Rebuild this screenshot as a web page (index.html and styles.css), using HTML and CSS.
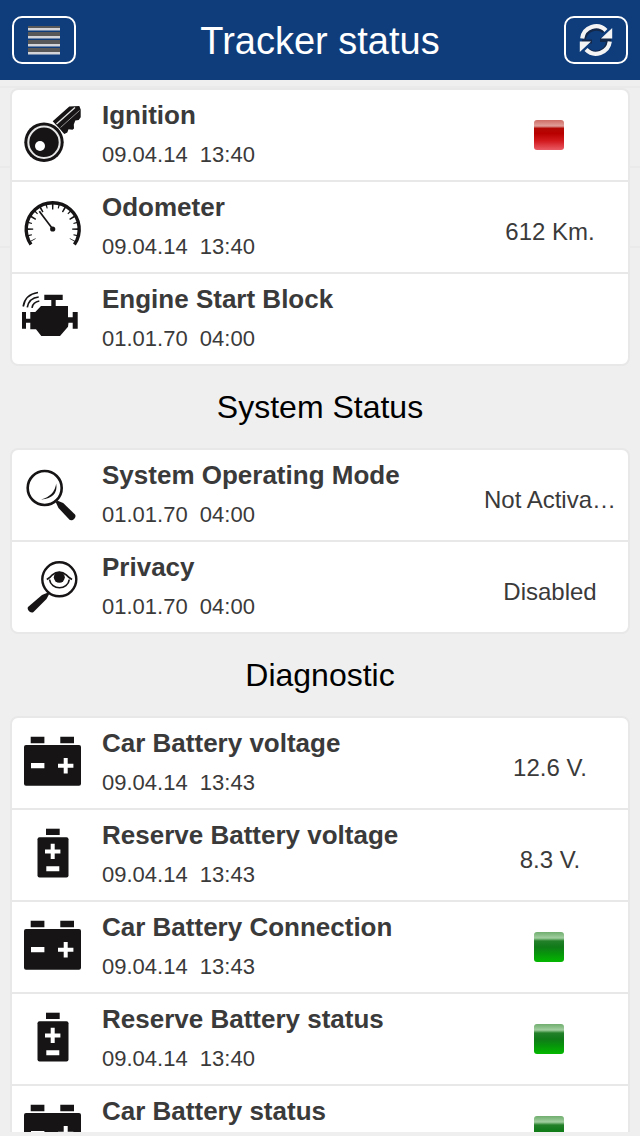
FILE: index.html
```html
<!DOCTYPE html>
<html lang="en">
<head>
    <meta charset="UTF-8">
    <meta name="viewport" content="width=device-width, initial-scale=1.0">
    <title>Tracker status</title>
    <link rel="stylesheet" href="styles.css">
</head>
<body>
    <!-- Shared icons -->
    <svg class="sprite" aria-hidden="true">
        <symbol id="car-battery" viewBox="0 0 90 90">
            <path d="M18.7 18.7h13.7v6.6H18.7zM48.3 18.7H62v6.6H48.3z"/>
            <rect x="12" y="27" width="57" height="40.7" rx="2"/>
            <path class="cut" d="M19 45h13.4v5.3H19zM51.7 40h4v5.7h5.7v4h-5.7v5.7h-4v-5.7H46v-4h5.7z"/>
        </symbol>
        <symbol id="reserve-battery" viewBox="0 0 90 90">
            <path d="M34 18.7h13.7V25H34z"/>
            <rect x="25.5" y="27.2" width="31" height="40.3" rx="2"/>
            <path class="cut" d="M38.7 33.7h4v5.7h5.7v4h-5.7V49h-4v-5.6H33v-4h5.7zM34.3 56.3h13v5h-13z"/>
        </symbol>
    </svg>

    <header class="topbar">
        <button class="topbar-button" type="button" aria-label="Menu">
            <svg width="34" height="30" viewBox="0 0 34 30">
                <path stroke="#585858" stroke-width="2" d="M1 2h32"/>
                <path stroke="#585858" stroke-width="4" d="M1 9h32M1 17h32M1 25h32"/>
                <path stroke="#d2d4d8" stroke-width="2.4" d="M1 4.200h32M1 12.200h32M1 20.200h32M1 28.200h32"/>
            </svg>
        </button>
        <h1>Tracker status</h1>
        <button class="topbar-button" type="button" aria-label="Refresh">
            <svg width="34" height="34" viewBox="0 0 34 34">
                <path fill="none" stroke="#14284a" stroke-width="4" d="M5 16A12.500 12.500 0 0 1 25 8.500M3 18.500h10M21 17h11M29 19A12.500 12.500 0 0 1 9 27"/>
                <path fill="none" stroke="#f4f4f4" stroke-width="4.200" d="M3.200 15.500A14 14 0 0 1 27 7.500M30.800 18.500A14 14 0 0 1 7 26.500"/>
                <path fill="#f4f4f4" d="M33.200 5v10.500H22zM.8 29V18.500H12z"/>
            </svg>
        </button>
    </header>

    <main class="content">
        <ul class="card">
            <li class="row">
                <svg class="icon" viewBox="0 0 90 90">
                    <path d="M40.700 31.300L57.300 16.500l10-.5 1.400 3.500v7.800l-2 2.700-3.400.5-1.500 4 .2 4-1.500 1.200-4-.5-1.200 3.200-3 1.600z"/>
                    <path class="line-light" stroke-width="1.300" d="M44.500 34L63 17.500"/>
                    <path class="line-light" stroke-width=".6" d="M48.500 37.500l19-17"/>
                    <circle class="cut" cx="32" cy="52.300" r="20.700"/>
                    <circle cx="32" cy="52.300" r="19.700"/>
                    <circle class="line-light" cx="32" cy="52.300" r="15.700" stroke-width="2"/>
                    <circle class="cut" cx="28" cy="56" r="5"/>
                </svg>
                <div class="info">
                    <h3>Ignition</h3>
                    <p>09.04.14&nbsp; 13:40</p>
                </div>
                <span class="lamp red" role="img" aria-label="Off"></span>
            </li>
            <li class="row">
                <svg class="icon" viewBox="0 0 90 90">
                    <path class="line" stroke-width="3.400" d="M19 62.500A26.500 26.500 0 1 1 62.400 62.500"/>
                    <path class="line" stroke-width="6" pathLength="240" stroke-dasharray="4 26" stroke-dashoffset="2" d="M21.200 58.300A22.500 22.500 0 1 1 60.200 58.300"/>
                    <path class="line" stroke-width="4" pathLength="240" stroke-dasharray="3 27" stroke-dashoffset="-13.500" d="M20.300 58.800A23.500 23.500 0 1 1 61.100 58.800"/>
                    <path class="line" stroke-width="1.700" d="M27.300 29.300L40.700 47"/>
                    <circle cx="40.700" cy="47" r="2.600"/>
                </svg>
                <div class="info">
                    <h3>Odometer</h3>
                    <p>09.04.14&nbsp; 13:40</p>
                </div>
                <span class="value">612 Km.</span>
            </li>
            <li class="row">
                <svg class="icon" viewBox="0 0 90 90">
                    <path d="M32.300 20.700h18.400V26h-7v6h-4.400v-6h-7z"/>
                    <path d="M29 32h27v11.300h4.700V38h5v16.700h-5v-6H56.500l-.5 4L48 62H29.300L24 55.300h-5.700v-6.600H14v6h-4V38h4v6.700h4.300V38h5z"/>
                    <path class="line" stroke-width="1.700" d="M11.200 32.500Q13 20.500 26 18.500M15.300 33.300Q17 24 26.700 23M20 33.800Q21 28 27.300 27"/>
                </svg>
                <div class="info">
                    <h3>Engine Start Block</h3>
                    <p>01.01.70&nbsp; 04:00</p>
                </div>
            </li>
        </ul>

        <h2>System Status</h2>
        <ul class="card">
            <li class="row">
                <svg class="icon" viewBox="0 0 90 90">
                    <circle class="line" cx="32.700" cy="38" r="17" stroke-width="2.600"/>
                    <path d="M44.200 33.500Q46.500 48 29 49.500Q42.500 46 44.200 33.500z"/>
                    <path d="M43.800 52.300l1.800-1.500 5.600 2.200L63 64.500c2 2.500-2.500 7.300-5.500 5.300L46.500 58z"/>
                </svg>
                <div class="info">
                    <h3>System Operating Mode</h3>
                    <p>01.01.70&nbsp; 04:00</p>
                </div>
                <span class="value">Not Activa…</span>
            </li>
            <li class="row">
                <svg class="icon" viewBox="0 0 90 90">
                    <circle class="line" cx="47.300" cy="37.300" r="17" stroke-width="2.400"/>
                    <path d="M36 50.500l-6 2.500L16 65c-1.500 2.500 2.500 7 5.500 5L34.500 57l2.800-5.200z"/>
                    <path class="line" stroke-width="1.700" d="M34.800 37.500Q39 35 40 33.200Q47.300 27 54.600 33.200Q56 35 60 37.500"/>
                    <path class="line" stroke-width="1.700" d="M37.500 37.500C39 48.500 56 48.500 57.300 37.500"/>
                    <circle cx="47.300" cy="35.300" r="5.500"/>
                </svg>
                <div class="info">
                    <h3>Privacy</h3>
                    <p>01.01.70&nbsp; 04:00</p>
                </div>
                <span class="value">Disabled</span>
            </li>
        </ul>

        <h2>Diagnostic</h2>
        <ul class="card">
            <li class="row">
                <svg class="icon"><use href="#car-battery"/></svg>
                <div class="info">
                    <h3>Car Battery voltage</h3>
                    <p>09.04.14&nbsp; 13:43</p>
                </div>
                <span class="value">12.6 V.</span>
            </li>
            <li class="row">
                <svg class="icon"><use href="#reserve-battery"/></svg>
                <div class="info">
                    <h3>Reserve Battery voltage</h3>
                    <p>09.04.14&nbsp; 13:43</p>
                </div>
                <span class="value">8.3 V.</span>
            </li>
            <li class="row">
                <svg class="icon"><use href="#car-battery"/></svg>
                <div class="info">
                    <h3>Car Battery Connection</h3>
                    <p>09.04.14&nbsp; 13:43</p>
                </div>
                <span class="lamp green" role="img" aria-label="OK"></span>
            </li>
            <li class="row">
                <svg class="icon"><use href="#reserve-battery"/></svg>
                <div class="info">
                    <h3>Reserve Battery status</h3>
                    <p>09.04.14&nbsp; 13:40</p>
                </div>
                <span class="lamp green" role="img" aria-label="OK"></span>
            </li>
            <li class="row">
                <svg class="icon"><use href="#car-battery"/></svg>
                <div class="info">
                    <h3>Car Battery status</h3>
                </div>
                <span class="lamp green" role="img" aria-label="OK"></span>
            </li>
        </ul>
    </main>
</body>
</html>
```
FILE: styles.css
```css
* {
    box-sizing: border-box;
}

body {
    font-family: "Liberation Sans", Arial, sans-serif;
    margin: 0;
    height: 100vh;
    padding-bottom: 4px;
    display: flex;
    flex-direction: column;
    background-color: #efefef;
    color: #3a3a3a;
}

h1, h2, h3, p, ul {
    margin: 0;
    padding: 0;
}

.sprite {
    display: none;
}

.topbar {
    display: flex;
    align-items: center;
    justify-content: space-between;
    flex-shrink: 0;
    height: 80px;
    padding: 0 12px;
    background-color: #0f3d7b;
    color: #fff;
}

.topbar h1 {
    padding-top: 2px;
    font-size: 38px;
    font-weight: normal;
}

.topbar-button {
    display: flex;
    align-items: center;
    justify-content: center;
    width: 64px;
    height: 48px;
    padding: 0;
    border: 2px solid #fff;
    border-radius: 10px;
    background: none;
}

.content {
    flex: 1;
    min-height: 0;
    overflow: hidden;
    padding: 8px 10px 0;
    /* faint row lines behind the first card */
    background: repeating-linear-gradient(#efefef 0 6px, #eaeaea 6px 8px, #efefef 8px 80px) no-repeat 0 0 / 100% 168px;
}

.content h2 {
    color: #000;
    font-size: 32px;
    font-weight: normal;
    line-height: 82px;
    text-align: center;
}

.card {
    list-style: none;
    background-color: #fff;
    border: 2px solid #e8e8e8;
    border-radius: 8px;
}

.row {
    display: flex;
    align-items: center;
    height: 92px;
    border-bottom: 2px solid #e8e8e8;
}

.row:last-child {
    height: 90px;
    border-bottom: none;
}

.icon {
    flex-shrink: 0;
    width: 90px;
    height: 90px;
    fill: #161415;
}

.cut {
    fill: #fff;
}

.line {
    fill: none;
    stroke: #161415;
}

.line-light {
    fill: none;
    stroke: #e6e6e6;
}

.info {
    flex: 1;
    align-self: flex-start;
    min-width: 0;
    padding-top: 7px;
}

.info h3 {
    font-size: 26px;
    line-height: 36px;
}

.info p {
    font-size: 22px;
    line-height: 44px;
}

.value {
    width: 136px;
    margin-right: 10px;
    padding-top: 10px;
    overflow: hidden;
    font-size: 24px;
    text-align: center;
    text-overflow: ellipsis;
    white-space: nowrap;
}

.lamp {
    width: 30px;
    height: 30px;
    margin-right: 64px;
    border-radius: 3px;
}

.red {
    background: linear-gradient(#cf6d66, #e0a09a 20%, #b30a06 28%, #b80000 45%, #d21a1e 70%, #ea5c66);
}

.green {
    background: linear-gradient(#6fae6d, #a3cfa0 20%, #23802a 30%, #107a18 50%, #06990a 75%, #04b800);
}
```
